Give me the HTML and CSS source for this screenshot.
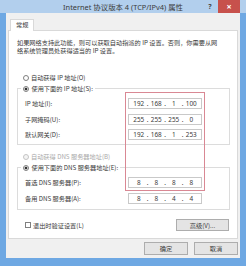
FILE: index.html
```html
<!DOCTYPE html>
<html lang="zh-CN">

<head>
    <meta charset="UTF-8">
    <meta name="viewport" content="width=device-width, initial-scale=1.0">
    <title>Internet 协议版本 4 (TCP/IPv4) 属性</title>
    <link rel="stylesheet" href="styles.css">
</head>

<body>
    <div class="window">
        <!-- Thanh tiêu đề -->
        <div class="titlebar">
            <span class="title">Internet 协议版本 4 (TCP/IPv4) 属性</span>
            <span class="help">?</span>
            <span class="close">×</span>
        </div>

        <div class="frame">
            <div class="dialog">
                <div class="tabs"><span class="tab">常规</span></div>

                <div class="panel">
                    <p class="desc">如果网络支持此功能，则可以获取自动指派的 IP 设置。否则，你需要从网<br>络系统管理员处获得适当的 IP 设置。</p>

                    <!-- IP -->
                    <div class="option first"><span class="radio"></span>自动获得 IP 地址(O)</div>
                    <fieldset class="group">
                        <legend class="option"><span class="radio checked"></span>使用下面的 IP 地址(S):</legend>
                        <div class="row">
                            <span class="label">IP 地址(I):</span>
                            <span class="ip"><span>192</span><i>.</i><span>168</span><i>.</i><span>1</span><i>.</i><span>100</span></span>
                        </div>
                        <div class="row">
                            <span class="label">子网掩码(U):</span>
                            <span class="ip"><span>255</span><i>.</i><span>255</span><i>.</i><span>255</span><i>.</i><span>0</span></span>
                        </div>
                        <div class="row">
                            <span class="label">默认网关(D):</span>
                            <span class="ip"><span>192</span><i>.</i><span>168</span><i>.</i><span>1</span><i>.</i><span>253</span></span>
                        </div>
                    </fieldset>

                    <!-- DNS -->
                    <div class="option disabled dns-auto"><span class="radio"></span>自动获得 DNS 服务器地址(B)</div>
                    <fieldset class="group dns">
                        <legend class="option"><span class="radio checked"></span>使用下面的 DNS 服务器地址(E):</legend>
                        <div class="row">
                            <span class="label">首选 DNS 服务器(P):</span>
                            <span class="ip"><span>8</span><i>.</i><span>8</span><i>.</i><span>8</span><i>.</i><span>8</span></span>
                        </div>
                        <div class="row">
                            <span class="label">备用 DNS 服务器(A):</span>
                            <span class="ip"><span>8</span><i>.</i><span>8</span><i>.</i><span>4</span><i>.</i><span>4</span></span>
                        </div>
                    </fieldset>

                    <div class="bottom-row">
                        <span class="check-label"><span class="checkbox"></span>退出时验证设置(L)</span>
                        <button type="button" class="btn advanced">高级(V)...</button>
                    </div>
                </div>

                <div class="footer">
                    <button type="button" class="btn ok">确定</button>
                    <button type="button" class="btn cancel">取消</button>
                </div>
            </div>
        </div>

        <!-- khung đánh dấu màu đỏ -->
        <div class="mark"></div>
    </div>
</body>

</html>
```

FILE: styles.css
```css
body {
    margin: 0;
    font-family: "Noto Sans CJK SC", "Noto Sans", sans-serif;
    font-size: 6.2px;
    color: #3a3a3a;
}

.window {
    position: relative;
    width: 246px;
    height: 266px;
    background-color: #6ea8e3;
    overflow: hidden;
}

.titlebar {
    display: flex;
    align-items: center;
    height: 13px;
    padding: 0 6px 0 41px;
    background-color: #b2cfed;
}

.title {
    flex: 1;
    text-align: center;
    font-family: "Noto Sans", "Noto Sans CJK SC", sans-serif;
    font-size: 7.4px;
    color: #3a3a3a;
    white-space: nowrap;
}

.help {
    width: 10px;
    margin-right: 3px;
    text-align: center;
    font-family: "Noto Sans", sans-serif;
    font-weight: bold;
    font-size: 7px;
    color: #444;
}

.close {
    width: 22px;
    height: 13px;
    line-height: 13px;
    text-align: center;
    background-color: #c7514c;
    color: white;
    font-family: "Noto Sans", sans-serif;
    font-weight: bold;
    font-size: 9px;
}

.frame {
    padding: 0 6px 8px 6px;
}

.dialog {
    height: 245px;
    padding: 0 2px;
    background-color: #f0f0f0;
}

.tabs {
    height: 11px;
    padding: 6px 0 0 2px;
}

.tab {
    position: relative;
    z-index: 1;
    display: inline-block;
    box-sizing: border-box;
    height: 12px;
    line-height: 10px;
    padding: 0 5px;
    background-color: white;
    border: 1px solid #d9d9d9;
    border-bottom: none;
}

.panel {
    box-sizing: border-box;
    height: 209px;
    padding-top: 8px;
    background-color: white;
    border: 1px solid #d9d9d9;
}

.desc {
    margin: 0;
    padding-left: 8px;
    line-height: 8px;
}

.option {
    display: flex;
    align-items: center;
    height: 11px;
    line-height: 11px;
    white-space: nowrap;
}

.first {
    margin-top: 17px;
    padding-left: 13.5px;
}

.dns-auto {
    margin-top: 6px;
    padding-left: 13.5px;
}

.disabled {
    color: #aaa;
}

.radio {
    display: inline-block;
    box-sizing: border-box;
    width: 6px;
    height: 6px;
    margin-right: 2.5px;
    border: 1px solid #808080;
    border-radius: 50%;
    background-color: white;
}

.radio.checked {
    background: radial-gradient(circle, #333 1.2px, white 1.7px);
}

.disabled .radio {
    border-color: #c4c4c4;
    background-color: #f4f4f4;
}

.group {
    margin: 0 7px 0 8px;
    padding: 0 0 4px 7px;
    border: 1px solid #dcdcdc;
}

.group legend {
    margin-left: -4px;
    padding: 0 2px;
}

.dns {
    padding-bottom: 5.5px;
}

.row {
    display: flex;
    align-items: center;
    height: 11px;
    margin-top: 4.5px;
}

.row:first-of-type {
    margin-top: 4px;
}

.label {
    width: 103px;
    white-space: nowrap;
}

.ip {
    display: grid;
    grid-template-columns: 1fr 4px 1fr 4px 1fr 4px 1fr;
    box-sizing: border-box;
    width: 74px;
    height: 11px;
    line-height: 9px;
    padding: 0 3px;
    background-color: white;
    border: 1px solid #c9c9c9;
    font-family: "Noto Sans", sans-serif;
    font-size: 6.4px;
    text-align: center;
    color: #3a3a3a;
}

.ip i {
    font-style: normal;
}

.bottom-row {
    display: flex;
    align-items: center;
    justify-content: space-between;
    height: 12px;
    margin-top: 9px;
    padding: 0 8px 0 16px;
}

.check-label {
    display: flex;
    align-items: center;
}

.checkbox {
    display: inline-block;
    box-sizing: border-box;
    width: 6px;
    height: 6px;
    margin-right: 2px;
    border: 1px solid #808080;
    background-color: white;
}

.btn {
    box-sizing: border-box;
    padding: 0;
    background-color: #e4e4e4;
    border: 1px solid #adadad;
    font-family: "Noto Sans CJK SC", "Noto Sans", sans-serif;
    font-size: 6.2px;
    color: #3a3a3a;
}

.advanced {
    width: 53px;
    height: 12px;
}

.footer {
    display: flex;
    justify-content: flex-end;
    gap: 6px;
    padding-top: 3px;
}

.ok,
.cancel {
    width: 44px;
    height: 13px;
}

.mark {
    position: absolute;
    left: 125px;
    top: 92px;
    width: 78px;
    height: 97px;
    border: 1px solid #d98894;
}
```
